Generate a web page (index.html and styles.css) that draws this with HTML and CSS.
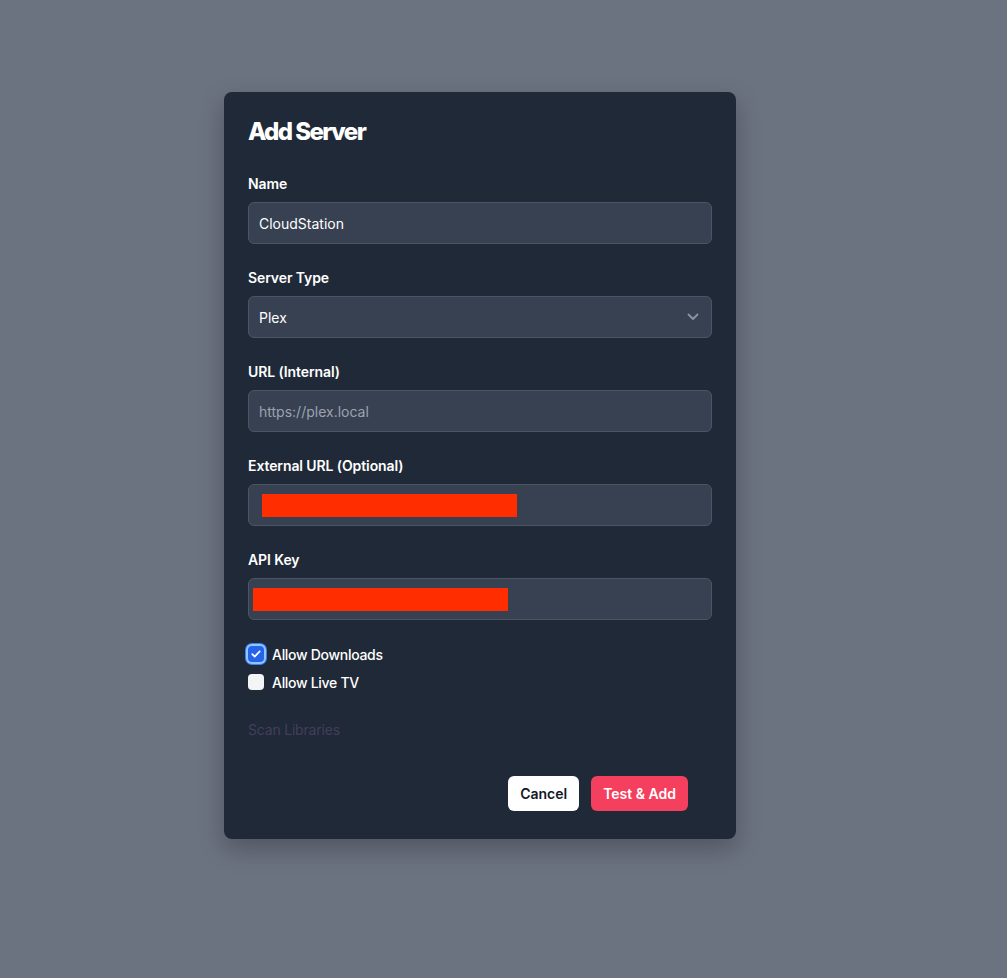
FILE: index.html
```html
<!DOCTYPE html>
<html lang="en">
<head>
<meta charset="utf-8">
<title>Add Server</title>
<link rel="stylesheet" href="styles.css">
</head>
<body>
<div class="overlay">
  <div class="modal">
    <h2 class="title">Add Server</h2>

    <div class="field">
      <label class="label">Name</label>
      <div class="input">CloudStation</div>
    </div>

    <div class="field">
      <label class="label">Server Type</label>
      <div class="input select">
        <span>Plex</span>
        <svg class="chev" width="12" height="8" viewBox="0 0 12 8" fill="none"><path d="M1.5 1.5l4.5 4.5 4.5-4.5" stroke="#8b93a3" stroke-width="1.8" stroke-linecap="round" stroke-linejoin="round"/></svg>
      </div>
    </div>

    <div class="field">
      <label class="label">URL (Internal)</label>
      <div class="input placeholder">https://plex.local</div>
    </div>

    <div class="field">
      <label class="label">External URL (Optional)</label>
      <div class="input redacted"><span class="redact redact-ext"></span></div>
    </div>

    <div class="field">
      <label class="label">API Key</label>
      <div class="input redacted"><span class="redact redact-api"></span></div>
    </div>

    <div class="checks">
      <div class="check-row">
        <span class="box checked">
          <svg width="12" height="12" viewBox="0 0 12 12" fill="none"><path d="M2.3 6.2l2.4 2.4 5-5.2" stroke="#fff" stroke-width="1.7" stroke-linecap="round" stroke-linejoin="round"/></svg>
        </span>
        <span class="check-label">Allow Downloads</span>
      </div>
      <div class="check-row">
        <span class="box"></span>
        <span class="check-label">Allow Live TV</span>
      </div>
    </div>

    <div class="scan">Scan Libraries</div>

    <div class="actions">
      <button class="btn btn-cancel">Cancel</button>
      <button class="btn btn-primary">Test &amp; Add</button>
    </div>
  </div>
</div>
</body>
</html>
```

FILE: styles.css
```css
* { box-sizing: border-box; }
html, body { margin: 0; padding: 0; }
body {
  background: #6b7280;
  font-family: Inter, "Noto Sans", "Liberation Sans", sans-serif;
  min-height: 978px;
}
.overlay {
  padding-top: 92px;
  padding-left: 224px;
  display: flex;
}
.modal {
  width: 512px;
  height: 747px;
  background: #1f2937;
  border-radius: 8px;
  padding: 24px 24px 28px;
  box-shadow: 0 10px 25px rgba(0,0,0,0.25);
  display: flex;
  flex-direction: column;
}
.title {
  margin: 0 0 26px;
  font-size: 24px;
  line-height: 32px;
  font-weight: 800;
  color: #fff;
  letter-spacing: -1.6px;
}
.field { margin-bottom: 24px; }
.label {
  display: block;
  font-size: 14px;
  line-height: 20px;
  font-weight: 600;
  color: #fff;
  margin-bottom: 8px;
  letter-spacing: -0.1px;
}
.input {
  height: 42px;
  background: #374151;
  border: 1px solid #4b5563;
  border-radius: 6px;
  padding: 0 10px;
  display: flex;
  align-items: center;
  font-size: 14px;
  color: #fff;
  position: relative;
}
.input.placeholder { color: #9ca3af; }
.select { justify-content: space-between; padding-right: 12px; }
.chev { display: block; }
.redact {
  position: absolute;
  background: #ff2d00;
  height: 23px;
  width: 255px;
}
.redact-ext { left: 13px; top: 9px; }
.redact-api { left: 4px; top: 9px; }
.checks {
  margin-top: 2px;
  display: flex;
  flex-direction: column;
  gap: 12px;
}
.check-row {
  display: flex;
  align-items: center;
  gap: 8px;
  height: 16px;
}
.box {
  width: 16px;
  height: 16px;
  border-radius: 4px;
  background: #f3f4f6;
  display: flex;
  align-items: center;
  justify-content: center;
}
.box.checked {
  background: #2563eb;
  border-radius: 4px;
  box-shadow: 0 0 0 2px #93c5fd, 0 0 0 3px #3b82f6;
}
.check-label {
  font-size: 14px;
  color: #fff;
  font-weight: 500;
  letter-spacing: -0.3px;
}
.scan {
  margin-top: 30px;
  font-size: 14px;
  line-height: 20px;
  color: #443e5a;
  letter-spacing: -0.2px;
}
.actions {
  margin-top: auto;
  display: flex;
  justify-content: flex-end;
  gap: 12px;
  padding-right: 24px;
}
.btn {
  height: 35px;
  border: none;
  border-radius: 6px;
  font-family: inherit;
  font-size: 14px;
  font-weight: 600;
  padding: 0 12px;
}
.btn-cancel { background: #fff; color: #111827; }
.btn-primary { background: #f43f5e; color: #fff; }
```
